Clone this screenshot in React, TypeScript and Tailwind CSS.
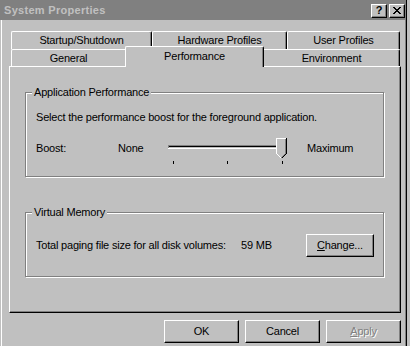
import type { ReactNode } from "react";

// classic 3d edges
const raised =
  "border border-white border-r-black border-b-black shadow-[inset_-1px_-1px_0_#808080]";
const etched =
  "border border-[#808080] shadow-[inset_1px_1px_0_#fff,1px_1px_0_#fff]";

function CloseGlyph() {
  const rows = ["11000011", "01100110", "00111100", "00011000", "00111100", "01100110", "11000011"];
  return (
    <svg width="8" height="7" viewBox="0 0 8 7" shapeRendering="crispEdges">
      {rows.map((r, y) =>
        r.split("").map((c, x) => (c === "1" ? <rect key={`${x}-${y}`} x={x} y={y} width="1" height="1" fill="#000" /> : null))
      )}
    </svg>
  );
}

function TitleBar() {
  return (
    <div className="h-[20px] bg-[#808080] flex items-center pl-[4px] pr-[1px]">
      <span className="font-bold text-[#c0c0c0] tracking-[0.3px] flex-1">System Properties</span>
      <div className="flex gap-[2px] mt-[1px]">
        <div className={`w-[16px] h-[14px] bg-[#c0c0c0] ${raised} flex items-center justify-center font-bold text-[11px] leading-none`}>
          ?
        </div>
        <div className={`w-[16px] h-[14px] bg-[#c0c0c0] ${raised} flex items-center justify-center`}>
          <CloseGlyph />
        </div>
      </div>
    </div>
  );
}

function Tab({ label, w, edges = "both" }: { label: string; w: string; edges?: "both" | "left" | "right" }) {
  const left = edges !== "right" ? "border-l rounded-tl-[2px]" : "";
  const right = edges !== "left" ? "border-r border-r-black rounded-tr-[2px] shadow-[inset_-1px_0_0_#808080]" : "";
  return (
    <div className={`${w} h-full border-t border-white ${left} ${right} flex items-center justify-center`}>
      {label}
    </div>
  );
}

function GroupBox({ title, h, children }: { title: string; h: string; children: ReactNode }) {
  return (
    <div className={`relative w-[359px] ${h} ${etched} pl-[10px]`}>
      <span className="absolute left-[6px] -top-[7px] px-[2px] bg-[#c0c0c0]">{title}</span>
      {children}
    </div>
  );
}

function Slider() {
  return (
    <svg width="128" height="31" viewBox="0 0 128 31" shapeRendering="crispEdges">
      <rect x="4" y="12" width="119" height="1" fill="#808080" />
      <rect x="4" y="13" width="119" height="1" fill="#000" />
      <rect x="4" y="14" width="119" height="1" fill="#c0c0c0" />
      <rect x="4" y="15" width="119" height="1" fill="#fff" />
      <rect x="4" y="12" width="1" height="3" fill="#808080" />
      {/* thumb */}
      <polygon points="112,5 123,5 123,21 117.5,26 112,21" fill="#c0c0c0" />
      <path d="M112.5 21 V5.5 H122" stroke="#fff" fill="none" />
      <path d="M112.5 20.5 L117 25" stroke="#fff" fill="none" />
      <path d="M121.5 6 V20.5 L117 25" stroke="#808080" fill="none" />
      <path d="M122.5 5 V20.5 L117.5 25.5" stroke="#000" fill="none" />
      {[9, 63, 118].map((x) => (
        <rect key={x} x={x} y="28" width="1" height="3" fill="#000" />
      ))}
    </svg>
  );
}

function Button({ children, w = "w-[75px]", disabled }: { children: ReactNode; w?: string; disabled?: boolean }) {
  return (
    <div
      className={`${w} h-[23px] ${raised} flex items-center justify-center ${
        disabled ? "text-[#808080] [text-shadow:1px_1px_0_#fff]" : ""
      }`}
    >
      {children}
    </div>
  );
}

export default function App() {
  return (
    <div className="w-[410px] h-[346px] bg-[#c0c0c0] overflow-hidden text-[11px] leading-[13px] text-black tracking-[-0.2px] font-['Liberation_Sans',Arial,sans-serif]">
      <div className="w-[407px] h-full border-r border-black flex flex-col">
        <TitleBar />
        <div className="flex-1 ml-[1px] border-l border-white pl-[7px] shadow-[inset_-1px_0_0_#808080]">
          {/* tab rows */}
          <div className="mt-[11px] ml-[2px] w-[389px]">
            <div className="flex h-[18px]">
              <Tab label="Startup/Shutdown" w="w-[141px]" />
              <Tab label="Hardware Profiles" w="w-[135px]" />
              <Tab label="User Profiles" w="w-[113px]" />
            </div>
            <div className="flex h-[17px] items-start">
              <Tab label="General" w="w-[114px]" edges="left" />
              <div className="relative z-10 -mt-[3px] w-[139px] h-[21px] bg-[#c0c0c0] border-t border-l border-r border-white border-r-black rounded-t-[2px] shadow-[inset_-1px_0_0_#808080] flex items-center justify-center pb-[1px]">
                Performance
              </div>
              <Tab label="Environment" w="w-[136px]" edges="right" />
            </div>
          </div>

          {/* page */}
          <div className="w-[392px] h-[247px] border border-white border-r-black border-b-black shadow-[inset_-1px_-1px_0_#808080] pt-[25px] pl-[15px]">
            <GroupBox title="Application Performance" h="h-[85px]">
              <p className="pt-[18px]">Select the performance boost for the foreground application.</p>
              <div className="flex items-center mt-[9px]">
                <span className="w-[82px]">Boost:</span>
                <span className="w-[46px]">None</span>
                <Slider />
                <span className="ml-[15px]">Maximum</span>
              </div>
            </GroupBox>

            <div className="mt-[35px]">
              <GroupBox title="Virtual Memory" h="h-[65px]">
                <div className="flex items-center mt-[21px]">
                  <span className="w-[205px]">Total paging file size for all disk volumes:</span>
                  <span className="w-[65px]">59 MB</span>
                  <Button w="w-[68px]">
                    <span>
                      <u>C</u>hange...
                    </span>
                  </Button>
                </div>
              </GroupBox>
            </div>
          </div>

          {/* dialog buttons */}
          <div className="w-[392px] flex justify-end gap-[6px] mt-[7px]">
            <Button>OK</Button>
            <Button>Cancel</Button>
            <Button disabled>
              <span>
                <u>A</u>pply
              </span>
            </Button>
          </div>
        </div>
      </div>
    </div>
  );
}
